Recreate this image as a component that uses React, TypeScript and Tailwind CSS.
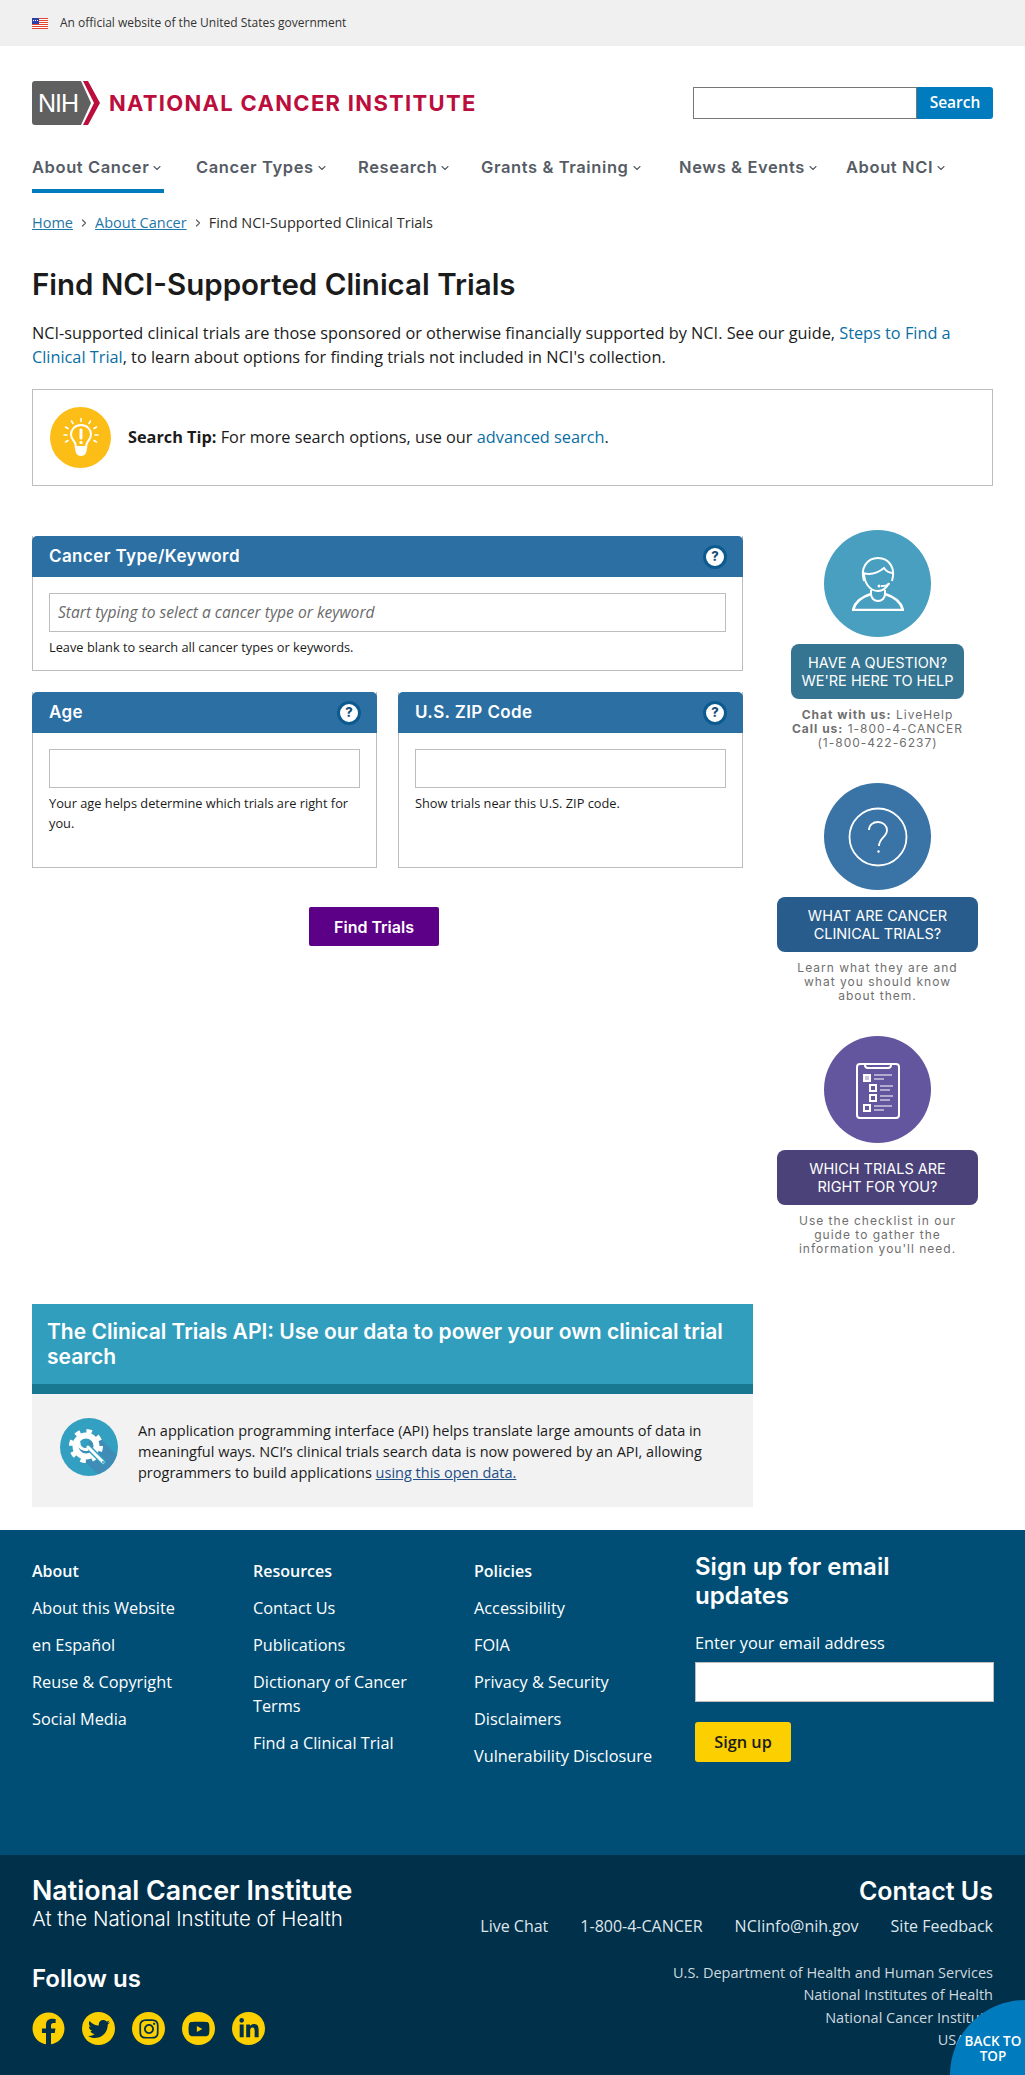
import { ChevronDown, ChevronRight } from 'lucide-react';
import { FaFacebook, FaTwitter, FaInstagram, FaYoutube, FaLinkedinIn } from 'react-icons/fa';

const NAV = [
  { label: 'About Cancer', width: 'w-[164px]' },
  { label: 'Cancer Types', width: 'w-[162px]' },
  { label: 'Research', width: 'w-[123px]' },
  { label: 'Grants & Training', width: 'w-[198px]' },
  { label: 'News & Events', width: 'w-[167px]' },
  { label: 'About NCI', width: 'w-[100px]' },
];

const FOOTER_COLS = [
  { title: 'About', links: ['About this Website', 'en Español', 'Reuse & Copyright', 'Social Media'] },
  { title: 'Resources', links: ['Contact Us', 'Publications', 'Dictionary of Cancer Terms', 'Find a Clinical Trial'] },
  { title: 'Policies', links: ['Accessibility', 'FOIA', 'Privacy & Security', 'Disclaimers', 'Vulnerability Disclosure'] },
];

function Flag() {
  return (
    <svg width="16" height="11" viewBox="0 0 16 11">
      <rect width="16" height="11" fill="#fff" />
      {[0, 2, 4, 6, 8, 10].map((y) => (
        <rect key={y} y={y} width="16" height="1" fill="#e2452f" />
      ))}
      <rect width="7" height="6" fill="#2f3fa8" />
      {[1, 3, 5].map((x) => (
        <rect key={x} x={x} y="2" width="1" height="1" fill="#fff" />
      ))}
    </svg>
  );
}

function NihMark() {
  return (
    <svg width="68" height="44" viewBox="0 0 68 44" className="shrink-0">
      <path d="M3 0H49L59 22L49 44H3Q0 44 0 41V3Q0 0 3 0Z" fill="#606060" />
      <path d="M51 0H56L68 22L56 44H51L62 22Z" fill="#bb0e3d" />
      <text x="6" y="31" fontFamily="'Liberation Sans', sans-serif" fontSize="25" fill="#fff" letterSpacing="-1">
        NIH
      </text>
    </svg>
  );
}

function Bulb() {
  return (
    <svg width="36" height="42" viewBox="0 0 36 42" fill="none" stroke="#fff" strokeWidth="2" strokeLinecap="round">
      <path d="M18 8c-6 0-10 4.500-10 9.500 0 4 2.500 5.500 4 8.500.7 1.300.8 2.500.8 4h10.400c0-1.500.1-2.700.8-4 1.500-3 4-4.500 4-8.500C28 12.500 24 8 18 8Z" />
      <path d="M13 30c0 5 2 8 5 8s5-3 5-8Z" fill="#fff" />
      <path d="M18 13v8" strokeWidth="3" />
      <circle cx="18" cy="25.500" r="1.600" fill="#fff" stroke="none" />
      <path d="M18 1.500v3M8.500 4l1.500 2.500M27.500 4 26 6.500M2.500 10l2.500 1.500M33.500 10 31 11.500M1 18h3M32 18h3M2.500 25l2.500-1.500M33.500 25 31 23.500" strokeWidth="1.600" />
    </svg>
  );
}

function AgentIcon() {
  return (
    <svg width="52" height="54" viewBox="0 0 52 54" fill="none" stroke="#fff" strokeWidth="2">
      <path d="M12 24C8 11 15 1 26 1s18 10 14 23" />
      <path d="M11 16c7 2 15 0 21-5 2 3 6 5 9 5" />
      <path d="M12 16c0 10 6 18 14 18 4 0 8-2 11-8" />
      <path d="M37 26c0 2-3 3-8 3" />
      <circle cx="27" cy="29" r="1.500" fill="#fff" stroke="none" />
      <path d="M19 33v4c0 4 3 7 7 7s7-3 7-7v-4" />
      <path d="M1 53c2-8 8-13 18-16M51 53c-2-8-8-13-18-16M0 53h52" strokeWidth="2.500" />
    </svg>
  );
}

function QuestionIcon() {
  return (
    <svg width="60" height="60" viewBox="0 0 60 60" fill="none" stroke="#fff" strokeWidth="1.800">
      <circle cx="30" cy="30" r="28.500" />
      <path d="M21 23c0-5 4-8 9-8s9 3.500 9 8c0 7-8 8-8 16" />
      <circle cx="30.500" cy="44.500" r="1.200" fill="#fff" stroke="none" />
    </svg>
  );
}

function ChecklistIcon() {
  return (
    <svg width="44" height="58" viewBox="0 0 44 58" fill="none" stroke="#fff" strokeWidth="2">
      <rect x="1" y="3" width="42" height="54" rx="3" />
      <path d="M9 3h26v1c0 2-1 3-3 3H12C10 7 9 6 9 4Z" fill="#63569f" />
      <rect x="8" y="14" width="6" height="6" fill="#c9c5dd" />
      <rect x="14" y="24" width="6" height="6" />
      <rect x="14" y="34" width="6" height="6" />
      <rect x="8" y="44" width="6" height="6" />
      <path d="M18 14h18M18 18h10M24 25h13M24 29h10M24 35h13M24 39h10M18 45h18M18 49h10" strokeWidth="1.200" />
    </svg>
  );
}

function ApiIcon() {
  return (
    <svg width="58" height="58" viewBox="0 0 58 58" className="shrink-0">
      <circle cx="29" cy="29" r="29" fill="#33a0c1" />
      <path d="M36 16 57 37Q52 52 38 56L17 37Z" fill="#3f8db6" />
      <circle cx="26" cy="28" r="10.500" fill="none" stroke="#fff" strokeWidth="6" />
      <circle cx="26" cy="28" r="15" fill="none" stroke="#fff" strokeWidth="4" strokeDasharray="5.500 6.280" />
      <path d="M28 29 43 44" fill="none" stroke="#33a0c1" strokeWidth="6" strokeLinecap="round" />
      <path d="M28 29 43 44" fill="none" stroke="#fff" strokeWidth="3" strokeLinecap="round" />
      <path d="M19 24a6.500 6.500 0 0 0 9 7" fill="none" stroke="#fff" strokeWidth="3" />
      <circle cx="43" cy="44" r="1" fill="#3f8db6" />
    </svg>
  );
}

function HelpBadge() {
  return (
    <span className="flex h-6 w-6 items-center justify-center rounded-full border-[3px] border-[#0d5a8e] bg-white font-['Inter',sans-serif] text-[13px] leading-none font-extrabold text-[#174f77]">
      ?
    </span>
  );
}

function FormCard({ title, className, children }: { title: string; className: string; children: React.ReactNode }) {
  return (
    <div className={`flex flex-col border border-[#bdbdbd] border-t-0 ${className}`}>
      <div className="mx-[-1px] flex h-[41px] shrink-0 items-center justify-between rounded-t-[5px] bg-[#2b6fa3] pr-4 pl-[17px]">
        <span className="font-['Inter',sans-serif] text-[17px] font-semibold tracking-[0.4px] text-white">{title}</span>
        <HelpBadge />
      </div>
      <div className="px-4 pt-4">{children}</div>
    </div>
  );
}

function SideBlock({
  icon,
  circle,
  label,
  labelClass,
  children,
}: {
  icon: React.ReactNode;
  circle: string;
  label: string[];
  labelClass: string;
  children: React.ReactNode;
}) {
  return (
    <div className="flex flex-col items-center">
      <div className={`flex h-[107px] w-[107px] items-center justify-center rounded-full ${circle}`}>{icon}</div>
      <div className={`mt-[7px] flex flex-col items-center justify-center rounded-lg font-['Inter',sans-serif] text-[14.5px] leading-[18px] text-white ${labelClass}`}>
        {label.map((l) => (
          <span key={l}>{l}</span>
        ))}
      </div>
      <div className="mt-[9px] text-center font-['Inter',sans-serif] text-[12px] leading-[14px] tracking-[1px] text-[#6f6f6f]">
        {children}
      </div>
    </div>
  );
}

export default function App() {
  return (
    <div className="relative h-[2075px] overflow-hidden bg-white font-['Open_Sans',sans-serif] text-[#1b1b1b]">
      {/* Gov banner */}
      <div className="flex h-[46px] items-center gap-3 bg-[#f0f0f0] px-8">
        <Flag />
        <span className="text-[12px] text-[#333]">An official website of the United States government</span>
      </div>

      {/* Header */}
      <div className="flex items-center justify-between px-8 pt-[35px]">
        <div className="flex items-center gap-[9px]">
          <NihMark />
          <span className="font-['Inter',sans-serif] text-[22px] leading-none font-bold tracking-[1.3px] text-[#bb0e3d]">
            NATIONAL CANCER INSTITUTE
          </span>
        </div>
        <div className="flex h-8 w-[300px]">
          <div className="flex-1 border border-[#767676] bg-white" />
          <button className="w-[76px] rounded-r-[3px] bg-[#007bbd] text-[15.5px] font-semibold text-white">Search</button>
        </div>
      </div>

      {/* Nav */}
      <div className="flex px-8 pt-[28px]">
        {NAV.map((item) => (
          <div key={item.label} className={`${item.width} flex shrink-0 flex-col`}>
            <div className="flex h-[36px] items-start pt-[2px]">
              <span className="flex items-center font-['Inter',sans-serif] text-[16.5px] font-semibold tracking-[0.6px] whitespace-nowrap text-[#565c65]">
                {item.label}
                <ChevronDown size={12} strokeWidth={2.2} className="mt-[2px] ml-[2px]" />
              </span>
            </div>
          </div>
        ))}
      </div>
      <div className="mx-8 h-1 w-[132px] bg-[#007bbd]" />

      {/* Breadcrumb */}
      <div className="flex items-center px-8 pt-5 text-[14.5px] leading-5">
        <a className="text-[#1f76a8] underline">Home</a>
        <ChevronRight size={12} strokeWidth={2.4} className="mx-[5px] text-[#606060]" />
        <a className="text-[#1f76a8] underline">About Cancer</a>
        <ChevronRight size={12} strokeWidth={2.4} className="mx-[5px] text-[#606060]" />
        <span className="text-[#2e2e2e]">Find NCI-Supported Clinical Trials</span>
      </div>

      {/* Title */}
      <div className="px-8">
        <h1 className="mt-[31px] font-['Inter',sans-serif] text-[29.5px] leading-[40px] font-semibold text-[#1b1b1b]">
          Find NCI-Supported Clinical Trials
        </h1>
        <p className="mt-[17px] text-[16.3px] leading-6">
          NCI-supported clinical trials are those sponsored or otherwise financially supported by NCI. See our guide,{' '}
          <a className="text-[#0a6ea4]">Steps to Find a Clinical Trial</a>, to learn about options for finding trials
          not included in NCI's collection.
        </p>

        <div className="mt-5 flex h-[97px] items-center gap-[17px] border border-[#bdbdbd] pl-[17px]">
          <div className="flex h-[61px] w-[61px] items-center justify-center rounded-full bg-[#fdbd17]">
            <Bulb />
          </div>
          <p className="text-[16.3px]">
            <b className="font-bold">Search Tip:</b> For more search options, use our{' '}
            <a className="text-[#0a6ea4]">advanced search</a>.
          </p>
        </div>
      </div>

      {/* Main */}
      <div className="flex items-start px-8 pt-11">
        <div className="w-[721px] shrink-0">
          <div className="w-[711px]">
            <div className="pt-[6px]">
              <FormCard title="Cancer Type/Keyword" className="h-[135px]">
                <div className="flex h-[39px] items-center border border-[#bdbdbd] px-2 text-[15.6px] text-[#6a6a6a] italic">
                  Start typing to select a cancer type or keyword
                </div>
                <p className="mt-[5px] text-[12.8px] leading-5">Leave blank to search all cancer types or keywords.</p>
              </FormCard>
            </div>

            <div className="mt-[21px] flex gap-[21px]">
              <FormCard title="Age" className="h-[176px] flex-1">
                <div className="h-[39px] border border-[#bdbdbd]" />
                <p className="mt-[5px] text-[12.8px] leading-5">Your age helps determine which trials are right for you.</p>
              </FormCard>
              <FormCard title="U.S. ZIP Code" className="h-[176px] flex-1">
                <div className="h-[39px] border border-[#bdbdbd]" />
                <p className="mt-[5px] text-[12.8px] leading-5">Show trials near this U.S. ZIP code.</p>
              </FormCard>
            </div>

            <div className="mt-[39px] ml-[277px]">
              <button className="h-[39px] w-[130px] rounded-[2px] bg-[#5b0087] font-['Inter',sans-serif] text-[16px] font-semibold text-white">
                Find Trials
              </button>
            </div>
          </div>
        </div>

        <div className="ml-6 flex w-[201px] shrink-0 flex-col gap-[33px]">
          <SideBlock
            icon={<AgentIcon />}
            circle="bg-[#489fc0]"
            label={['HAVE A QUESTION?', "WE'RE HERE TO HELP"]}
            labelClass="h-[55px] w-[173px] bg-[#367591]"
          >
            <b className="font-bold">Chat with us:</b> LiveHelp
            <br />
            <b className="font-bold">Call us:</b> 1-800-4-CANCER
            <br />
            (1-800-422-6237)
          </SideBlock>
          <SideBlock
            icon={<QuestionIcon />}
            circle="bg-[#3a74a7]"
            label={['WHAT ARE CANCER', 'CLINICAL TRIALS?']}
            labelClass="h-[55px] w-[201px] bg-[#285c8c]"
          >
            Learn what they are and
            <br />
            what you should know
            <br />
            about them.
          </SideBlock>
          <SideBlock
            icon={<ChecklistIcon />}
            circle="bg-[#63569f]"
            label={['WHICH TRIALS ARE', 'RIGHT FOR YOU?']}
            labelClass="h-[55px] w-[201px] bg-[#4b4279]"
          >
            Use the checklist in our
            <br />
            guide to gather the
            <br />
            information you'll need.
          </SideBlock>
        </div>
      </div>

      {/* API promo */}
      <div className="mx-8 mt-[48px] w-[721px]">
        <div className="h-[90px] border-b-[10px] border-[#187892] bg-[#329ebd] px-[15px] pt-[15px]">
          <h2 className="font-['Inter',sans-serif] text-[21px] leading-[25px] font-semibold text-white">
            The Clinical Trials API: Use our data to power your own clinical trial search
          </h2>
        </div>
        <div className="flex h-[113px] items-start gap-5 bg-[#f2f2f2] pt-6 pl-7">
          <ApiIcon />
          <p className="mt-[2px] w-[585px] text-[14.5px] leading-[21px]">
            An application programming interface (API) helps translate large amounts of data in meaningful ways. NCI’s
            clinical trials search data is now powered by an API, allowing programmers to build applications{' '}
            <a className="text-[#1f4f86] underline">using this open data.</a>
          </p>
        </div>
      </div>

      {/* Footer links */}
      <div className="mt-[23px] flex h-[325px] bg-[#004e75] px-8 pt-[29px] text-white">
        {FOOTER_COLS.map((col) => (
          <div key={col.title} className="w-[221px] shrink-0 pr-6">
            <div className="text-[16px] leading-6 font-semibold">{col.title}</div>
            <ul className="mt-[13px] flex flex-col gap-[13px]">
              {col.links.map((l) => (
                <li key={l} className="text-[16.3px] leading-[24px]">
                  {l}
                </li>
              ))}
            </ul>
          </div>
        ))}
        <div className="w-[299px] shrink-0">
          <div className="mt-[-7px] font-['Inter',sans-serif] text-[24px] leading-[29px] font-semibold">
            Sign up for email
            <br />
            updates
          </div>
          <div className="mt-[21px] text-[16.3px] leading-6">Enter your email address</div>
          <div className="mt-[7px] h-10 border border-[#bdbdbd] bg-white" />
          <button className="mt-[20px] h-10 w-[96px] rounded-[3px] bg-[#fcd000] text-[16.3px] font-semibold text-[#1b1b1b]">
            Sign up
          </button>
        </div>
      </div>

      {/* Lower footer */}
      <div className="flex h-[220px] justify-between bg-[#00304a] px-8 pt-[18px] text-white">
        <div>
          <div className="font-['Inter',sans-serif] text-[26.8px] leading-[34px] font-semibold">National Cancer Institute</div>
          <div className="font-['Inter',sans-serif] text-[20.4px] leading-[24px] font-light">At the National Institute of Health</div>
          <div className="mt-[32px] font-['Inter',sans-serif] text-[24px] leading-[32px] font-semibold">Follow us</div>
          <div className="mt-[17px] flex gap-[17px]">
            <FaFacebook size={33} className="text-[#fcd000]" />
            {[FaTwitter, FaInstagram, FaYoutube, FaLinkedinIn].map((Icon, i) => (
              <span key={i} className="flex h-[33px] w-[33px] items-center justify-center rounded-full bg-[#fcd000]">
                <Icon size={22} className="text-[#00304a]" />
              </span>
            ))}
          </div>
        </div>
        <div className="flex flex-col items-end">
          <div className="font-['Inter',sans-serif] text-[25px] leading-[36px] font-semibold">Contact Us</div>
          <div className="mt-[5px] flex gap-8 text-[16px] leading-6 text-[#dfe6ea]">
            <span>Live Chat</span>
            <span>1-800-4-CANCER</span>
            <span>NCIinfo@nih.gov</span>
            <span>Site Feedback</span>
          </div>
          <div className="mt-[24px] text-right text-[14.5px] leading-[22.400px] text-[#cfd8de]">
            <div>U.S. Department of Health and Human Services</div>
            <div>National Institutes of Health</div>
            <div>National Cancer Institute</div>
            <div>USA.gov</div>
          </div>
        </div>
      </div>

      {/* Back to top */}
      <div className="absolute top-[2000px] left-[950px] h-[150px] w-[150px] rounded-full bg-[#007bbd] pt-[34px] pl-[13px]">
        <span className="block w-[60px] text-center text-[13.5px] leading-[15px] font-semibold text-white">
          BACK TO
          <br />
          TOP
        </span>
      </div>
    </div>
  );
}
